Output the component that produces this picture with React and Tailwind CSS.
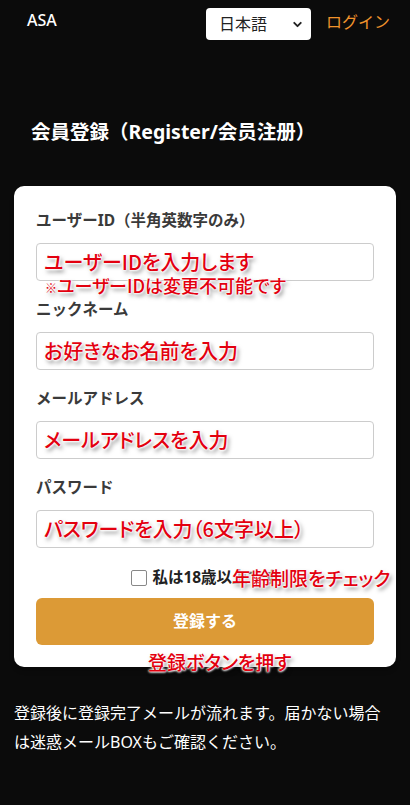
import { ChevronDown } from "lucide-react";

const note =
  "text-[#e3000f] font-medium font-['Noto_Sans_CJK_JP',sans-serif] [font-feature-settings:'palt'] [text-shadow:0_0_2px_#fff,0_0_2px_#fff,0_0_3px_#fff,0_0_3px_#fff,2px_3px_4px_rgba(0,0,0,0.5)] whitespace-nowrap leading-none";

const Field = ({ label, hint, children }) => (
  <div className="mb-[17px]">
    <label className="block h-[22px] mb-3 text-[15.5px] leading-[22px] font-bold text-[#3a3a3a]">
      {label}
    </label>
    <div className="relative h-[38px] rounded border border-[#ccc] bg-white">
      <span className={`absolute left-[7px] top-[8px] text-[20px] ${note}`}>{hint}</span>
      {children}
    </div>
  </div>
);

const App = () => {
  return (
    <div className="min-h-[805px] bg-[#0b0b0b] text-white font-['Noto_Sans','Noto_Sans_CJK_JP',sans-serif]">
      {/* Header */}
      <header className="flex items-center h-12 pl-[27px] pr-5">
        <span className="text-[16px] font-medium -mt-2">ASA</span>
        <div className="ml-auto flex items-center gap-[15px]">
          <div className="flex items-center w-[105px] h-[32px] bg-white rounded pl-[13px] pr-[7px] text-[#222] text-[16px]">
            <span>日本語</span>
            <ChevronDown size={13} strokeWidth={3.5} className="ml-auto" />
          </div>
          <span className="text-[#f0922b] text-[16px] -mt-1">ログイン</span>
        </div>
      </header>

      <main className="px-[14px]">
        <h2 className="pl-[17px] pt-[74px] pb-[44px] text-[19.5px] font-bold leading-none">
          会員登録（Register/会员注册）
        </h2>

        <div className="bg-white rounded-[10px] px-[22px] pt-[23px] pb-[22px] text-[#333] shadow-md">
          <Field label="ユーザーID（半角英数字のみ）" hint="ユーザーIDを入力します">
            <span className={`absolute left-[8px] top-[32px] text-[18px] ${note}`}>
              <span className="text-[12px]">※</span>ユーザーIDは変更不可能です
            </span>
          </Field>
          <Field label="ニックネーム" hint="お好きなお名前を入力" />
          <Field label="メールアドレス" hint="メールアドレスを入力" />
          <Field label="パスワード" hint="パスワードを入力（6文字以上）" />

          <div className="relative flex items-center justify-center h-5 mt-[20px]">
            <span className="w-4 h-4 border border-[#888] rounded-[2px] bg-white mr-[5px]" />
            <span className="text-[15.5px] font-bold text-[#222]">私は18歳以上です</span>
            <span className={`absolute left-[196px] top-[0px] text-[19px] ${note}`}>
              年齢制限をチェック
            </span>
          </div>

          <div className="relative mt-[10px]">
            <button className="w-full h-[47px] rounded-md bg-[#dc9a36] text-white text-[16px] font-bold">
              登録する
            </button>
            <span className={`absolute left-[112px] top-[54px] text-[19px] ${note}`}>
              登録ボタンを押す
            </span>
          </div>
        </div>

        <p className="mt-[32px] text-[16px] leading-[29px] text-white">
          登録後に登録完了メールが流れます。届かない場合は迷惑メールBOXもご確認ください。
        </p>
      </main>
    </div>
  );
};

export default App;
